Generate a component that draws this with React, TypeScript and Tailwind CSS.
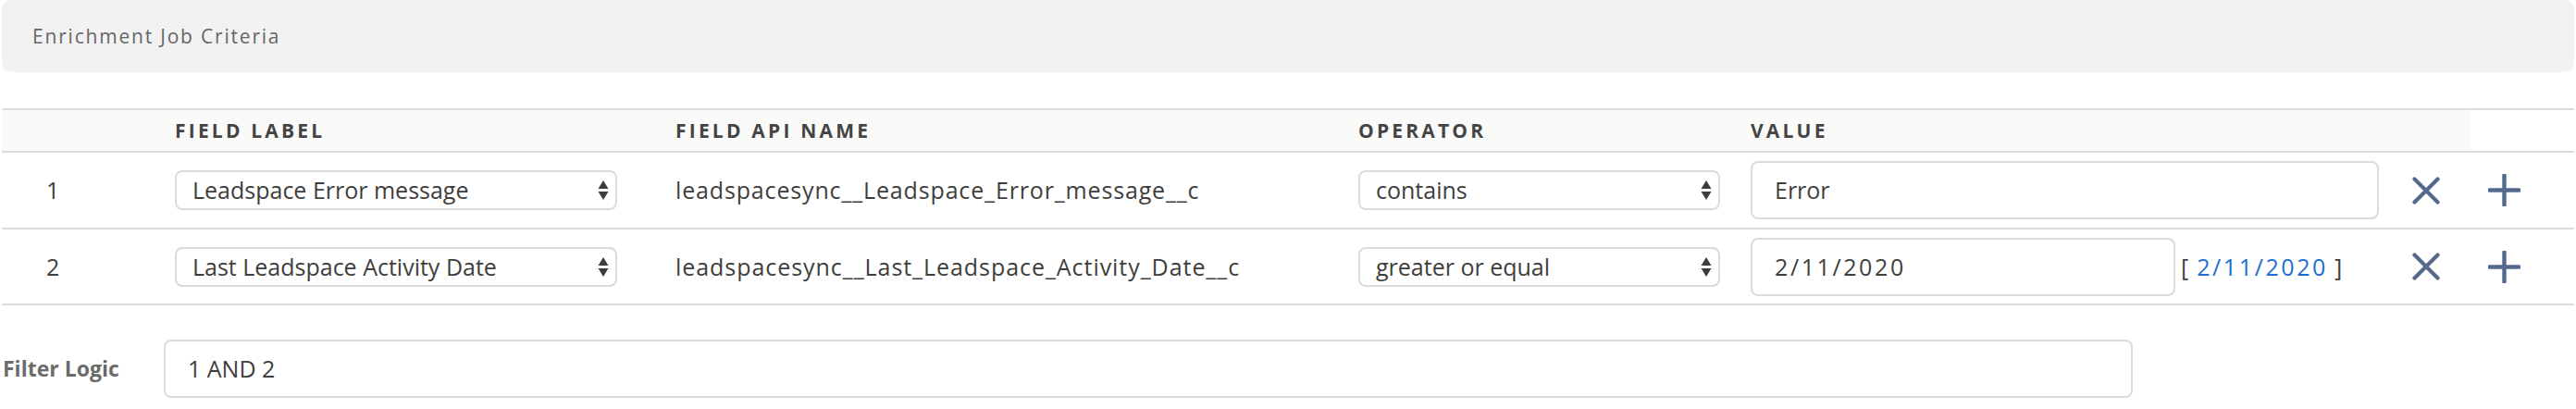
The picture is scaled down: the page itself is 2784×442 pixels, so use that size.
import React from "react";

const Arrows = () => (
  <svg width="12" height="21" viewBox="0 0 12 21" className="shrink-0">
    <path d="M6 0 L11.5 9 L0.5 9 Z" fill="#3e3e3c" />
    <path d="M6 21 L11.5 12 L0.5 12 Z" fill="#3e3e3c" />
  </svg>
);

const XIcon = () => (
  <svg width="30" height="30" viewBox="0 0 30 30">
    <path d="M2.5 2.5 L27.5 27.5 M27.5 2.5 L2.5 27.5" stroke="#54698d" strokeWidth="4.2" strokeLinecap="round" />
  </svg>
);

const PlusIcon = () => (
  <svg width="35" height="35" viewBox="0 0 35 35">
    <path d="M17.5 1.5 L17.5 33.5 M1.5 17.5 L33.5 17.5" stroke="#54698d" strokeWidth="4.4" strokeLinecap="round" />
  </svg>
);

function Select({ text, w }: { text: string; w: string }) {
  return (
    <div className={`${w} h-[43px] rounded-[8px] border-2 border-[#dddbda] bg-white flex items-center justify-between pl-[17px] pr-[7px]`}>
      <span>{text}</span>
      <Arrows />
    </div>
  );
}

function TextBox({ text, w, track }: { text: string; w: string; track?: boolean }) {
  return (
    <div className={`${w} h-[63px] rounded-[8px] border-2 border-[#dddbda] bg-white flex items-center pl-[24px]`}>
      <span className={track ? "tracking-[2.6px]" : ""}>{text}</span>
    </div>
  );
}

const rowGrid = "grid grid-cols-[187px_541px_738px_424px_679px_100px_1fr] items-center";

export default function App() {
  return (
    <div className="w-[2784px] h-[442px] bg-white text-[25px] text-[#3e3e3c] font-['Open_Sans',sans-serif] leading-none">
      <div className="mx-[2px] h-[78px] rounded-[10px] bg-[#f2f2f2] flex items-center pl-[33px] text-[21px] tracking-[1.8px] text-[#666666]">
        Enrichment Job Criteria
      </div>

      <div className="mt-[39px] mx-[2px] border-t-2 border-[#dddbda]">
        <div className={`${rowGrid} h-[46px] border-b-2 border-[#dddbda] text-[21px] font-bold tracking-[3.2px] text-[#444444]`}>
          <div className="h-full bg-[#fafaf9]" />
          <div className="h-full bg-[#fafaf9] flex items-center">FIELD LABEL</div>
          <div className="h-full bg-[#fafaf9] flex items-center">FIELD API NAME</div>
          <div className="h-full bg-[#fafaf9] flex items-center">OPERATOR</div>
          <div className="h-full bg-[#fafaf9] flex items-center">VALUE</div>
          <div className="h-full bg-[#fafaf9]" />
          <div className="h-full" />
        </div>

        <div className={`${rowGrid} h-[83px] border-b-2 border-[#dddbda]`}>
          <div className="pl-[48px]">1</div>
          <div>
            <Select text="Leadspace Error message" w="w-[478px]" />
          </div>
          <div className="tracking-[0.85px]">leadspacesync__Leadspace_Error_message__c</div>
          <div>
            <Select text="contains" w="w-[391px]" />
          </div>
          <div>
            <TextBox text="Error" w="w-[679px]" />
          </div>
          <div className="flex pl-[36px]">
            <XIcon />
          </div>
          <div className="flex pl-[18px]">
            <PlusIcon />
          </div>
        </div>

        <div className={`${rowGrid} h-[82px] border-b-2 border-[#dddbda]`}>
          <div className="pl-[48px]">2</div>
          <div>
            <Select text="Last Leadspace Activity Date" w="w-[478px]" />
          </div>
          <div className="tracking-[0.95px]">leadspacesync__Last_Leadspace_Activity_Date__c</div>
          <div>
            <Select text="greater or equal" w="w-[391px]" />
          </div>
          <div className="flex items-center">
            <TextBox text="2/11/2020" w="w-[459px]" track />
            <span className="ml-[6px]">[</span>
            <span className="ml-[9px] text-[#1b6fd1] tracking-[2.6px]">2/11/2020</span>
            <span className="ml-[7px]">]</span>
          </div>
          <div className="flex pl-[36px]">
            <XIcon />
          </div>
          <div className="flex pl-[18px]">
            <PlusIcon />
          </div>
        </div>
      </div>

      <div className="mt-[37px] flex items-center">
        <div className="w-[177px] pl-[3px] text-[23px] font-bold text-[#6b6b6b]">Filter Logic</div>
        <TextBox text="1 AND 2" w="w-[2128px]" />
      </div>
    </div>
  );
}
